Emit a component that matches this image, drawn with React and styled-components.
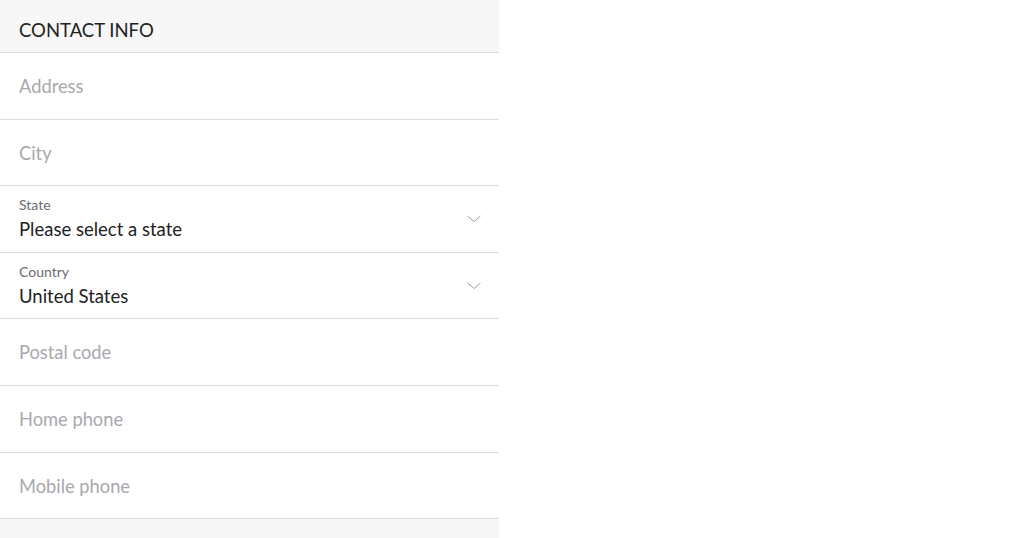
import React from "react";
import styled, { createGlobalStyle } from "styled-components";

const GlobalStyle = createGlobalStyle`
  html, body {
    margin: 0;
    padding: 0;
    background: #ffffff;
    font-family: Lato, "Open Sans", sans-serif;
  }
`;

const Page = styled.div`
  width: 1024px;
  height: 538px;
  display: flex;
  overflow: hidden;
`;

const Panel = styled.div`
  width: 499px;
  height: 538px;
  background: #f7f7f7;
  display: flex;
  flex-direction: column;
`;

const Header = styled.div`
  height: 53px;
  box-sizing: border-box;
  padding-left: 19px;
  padding-top: 7px;
  display: flex;
  align-items: center;
  font-size: 18.5px;
  color: #222222;
  border-bottom: 1px solid #dcdce0;
`;

const Row = styled.div`
  height: ${(p) => p.h}px;
  box-sizing: border-box;
  background: #ffffff;
  border-bottom: 1px solid #dcdce0;
  padding: 0 18px 0 19px;
  display: flex;
  align-items: center;
  justify-content: space-between;
`;

const Placeholder = styled.div`
  font-size: 18.3px;
  color: #a8a8ae;
`;

const Field = styled.div`
  display: flex;
  flex-direction: column;
`;

const Label = styled.div`
  font-size: 14px;
  color: #6b6b70;
  line-height: 16px;
`;

const Value = styled.div`
  font-size: 18.5px;
  color: #222222;
  line-height: 24px;
  margin-top: 4px;
`;

const Chevron = () => (
  <svg width="14" height="8" viewBox="0 0 14 8">
    <path d="M0.5 1 L7 6.5 L13.5 1" fill="none" stroke="#a0a0a6" strokeWidth="1" />
  </svg>
);

const heights = [67, 66, 67, 66, 67, 67, 66];

export default function App() {
  return (
    <Page>
      <GlobalStyle />
      <Panel>
        <Header>CONTACT INFO</Header>
        <Row h={heights[0]}>
          <Placeholder>Address</Placeholder>
        </Row>
        <Row h={heights[1]}>
          <Placeholder>City</Placeholder>
        </Row>
        <Row h={heights[2]}>
          <Field>
            <Label>State</Label>
            <Value>Please select a state</Value>
          </Field>
          <Chevron />
        </Row>
        <Row h={heights[3]}>
          <Field>
            <Label>Country</Label>
            <Value>United States</Value>
          </Field>
          <Chevron />
        </Row>
        <Row h={heights[4]}>
          <Placeholder>Postal code</Placeholder>
        </Row>
        <Row h={heights[5]}>
          <Placeholder>Home phone</Placeholder>
        </Row>
        <Row h={heights[6]}>
          <Placeholder>Mobile phone</Placeholder>
        </Row>
      </Panel>
    </Page>
  );
}
